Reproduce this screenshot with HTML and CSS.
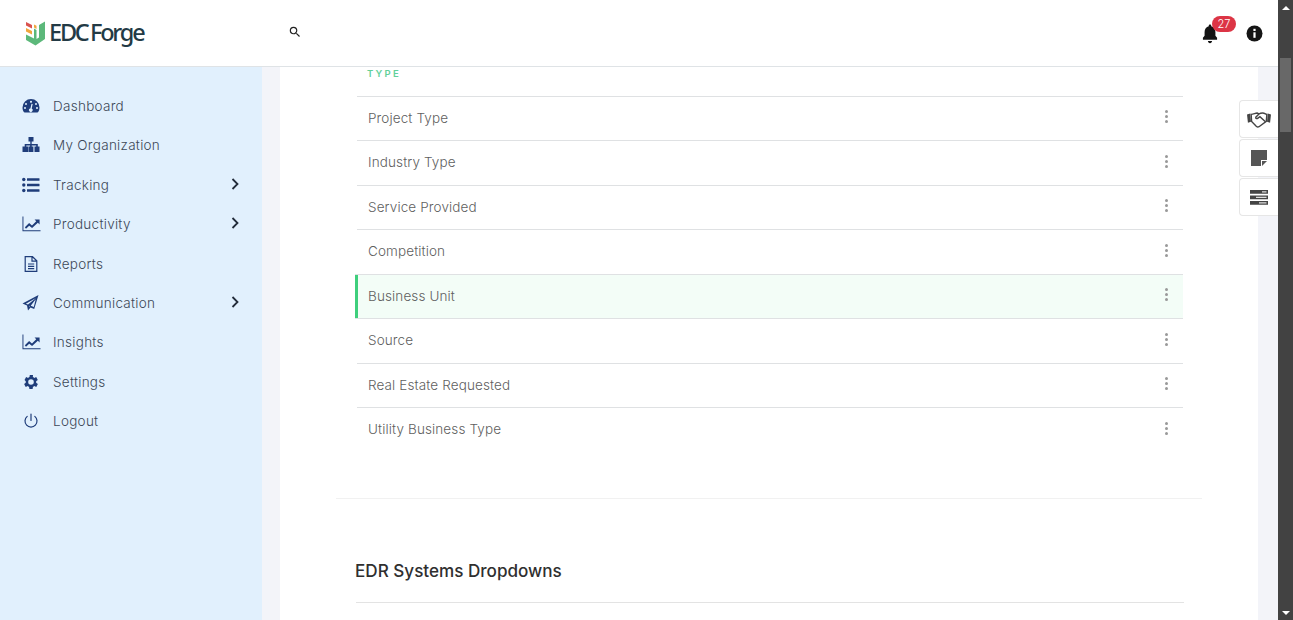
FILE: index.html
```html
<!DOCTYPE html>
<html lang="en">
<head>
<meta charset="utf-8">
<title>EDC Forge</title>
<link rel="stylesheet" href="styles.css">
</head>
<body>
<div class="app">
  <div class="page">
    <header class="topbar">
      <div class="logo">
        <svg class="logo-mark" width="22" height="26" viewBox="0 0 22 26">
          <path d="M1 2l6 3v3.500L1 5.500z" fill="#d9534f"/>
          <path d="M1 8l6 3v3.500l-6-3z" fill="#f0a63c"/>
          <path d="M1 14.500l8 4V8.500l2.500 1.500v9l2.500-1.500V5l6-3.500V19l-9.500 6.500L1 20z" fill="#5cb87a"/>
          <path d="M9 4.500l2.500 1.200V9L9 7.500z" fill="#f0a63c"/>
        </svg>
        <span class="logo-text">EDC Forge</span>
      </div>
      <svg class="search" width="14" height="14" viewBox="0 0 24 24"><path d="M15.500 14h-.79l-.28-.27A6.470 6.470 0 0 0 16 9.500 6.500 6.500 0 1 0 9.500 16c1.610 0 3.090-.59 4.230-1.570l.27.28v.79l5 4.990L20.490 19zm-6 0C7.010 14 5 11.990 5 9.500S7.010 5 9.500 5 14 7.010 14 9.500 11.990 14 9.500 14z" fill="#222"/></svg>
      <div class="top-actions">
        <div class="bell">
          <svg width="20" height="20" viewBox="0 0 24 24"><path d="M12 23c1.400 0 2.500-1.100 2.500-2.500h-5C9.500 21.900 10.600 23 12 23zm8.500-6.500L18.500 14V9.500c0-3.300-2-6-5-6.800V2c0-.9-.7-1.500-1.500-1.500S10.500 1.100 10.500 2v.7c-3 .8-5 3.500-5 6.800V14l-2 2.500V19h17z" fill="#141414"/></svg>
          <span class="badge">27</span>
        </div>
        <svg class="info" width="17" height="17" viewBox="0 0 17 17"><circle cx="8.500" cy="8.500" r="8" fill="#151515"/><rect x="7.400" y="7.300" width="2.200" height="5.500" fill="#fff"/><rect x="7.400" y="3.800" width="2.200" height="2.200" fill="#fff"/></svg>
      </div>
    </header>
    <div class="body-row">
      <nav class="sidebar">
        <a class="nav-item">
          <svg class="nav-icon" viewBox="0 0 18 16"><path fill-rule="evenodd" d="M9 1a8.500 8.500 0 0 0-8.500 8.500c0 1.700.5 3.300 1.300 4.600.2.300.5.400.8.400h12.800c.3 0 .6-.1.800-.4.800-1.300 1.300-2.900 1.300-4.600A8.500 8.500 0 0 0 9 1zM9 2.800a1 1 0 1 1 0 2.100 1 1 0 0 1 0-2.100zM4 5a1 1 0 1 1 0 2 1 1 0 0 1 0-2zM14 5a1 1 0 1 1 0 2 1 1 0 0 1 0-2zM3 9a1 1 0 1 1 0 2 1 1 0 0 1 0-2zM15 9a1 1 0 1 1 0 2 1 1 0 0 1 0-2zM10.700 6l-1 4.600a1.800 1.800 0 1 1-1.300-.2L9.500 5.800z"/></svg>
          <span class="nav-label">Dashboard</span>
        </a>
        <a class="nav-item">
          <svg class="nav-icon" viewBox="0 0 18 16"><path d="M6.500 0h5v4.500H9.700v2.600h6.100v2.400h1.700V15h-5V9.500h1.700V8.500H9.700v1h1.700V15h-5V9.500h1.700v-1H4.300v1h1.700V15H.5V9.500h2.200V7.100h5.600V4.500H6.500z"/></svg>
          <span class="nav-label">My Organization</span>
        </a>
        <a class="nav-item">
          <svg class="nav-icon" viewBox="0 0 18 16"><circle cx="1.800" cy="2.500" r="1.700"/><circle cx="1.800" cy="8" r="1.700"/><circle cx="1.800" cy="13.500" r="1.700"/><rect x="5" y="1.200" width="12.500" height="2.600" rx=".4"/><rect x="5" y="6.700" width="12.500" height="2.600" rx=".4"/><rect x="5" y="12.200" width="12.500" height="2.600" rx=".4"/></svg>
          <span class="nav-label">Tracking</span>
          <svg class="chev" viewBox="0 0 8 12"><path d="M1.500 1l5 5-5 5"/></svg>
        </a>
        <a class="nav-item">
          <svg class="nav-icon nav-wide" viewBox="0 0 20 16"><path d="M.5 0h1v14.500H19.500v1H.5z"/><path d="M3 11.500l4.500-4.500 3 2.500L15 5l-1.800-1.800H18.500V8.500L16.700 6.700 10.600 12.300l-3-2.500-3.400 3.200z"/></svg>
          <span class="nav-label">Productivity</span>
          <svg class="chev" viewBox="0 0 8 12"><path d="M1.500 1l5 5-5 5"/></svg>
        </a>
        <a class="nav-item">
          <svg class="nav-icon nav-line" viewBox="0 0 18 16"><path d="M3.200.7h7.300l4.300 4v10.600H3.200zM10 .7v4.500h4.800M6 8h6.200M6 10.300h6.200M6 12.600h6.200"/></svg>
          <span class="nav-label">Reports</span>
        </a>
        <a class="nav-item">
          <svg class="nav-icon" viewBox="0 0 18 16"><path fill-rule="evenodd" d="M16.500 0L.5 8.600l4.500 1.800 1 5.100 2.500-3 3.700 1.500zM14 3l-8 6.600-2.200-.9zM13.700 4.300l-1.900 7.700-3.100-1.300zM7.200 10.700l.7.300-.9 1.100z"/></svg>
          <span class="nav-label">Communication</span>
          <svg class="chev" viewBox="0 0 8 12"><path d="M1.500 1l5 5-5 5"/></svg>
        </a>
        <a class="nav-item">
          <svg class="nav-icon nav-wide" viewBox="0 0 20 16"><path d="M.5 0h1v14.500H19.500v1H.5z"/><path d="M3 11.500l4.500-4.500 3 2.500L15 5l-1.800-1.800H18.500V8.500L16.700 6.700 10.600 12.300l-3-2.500-3.400 3.200z"/></svg>
          <span class="nav-label">Insights</span>
        </a>
        <a class="nav-item">
          <svg class="nav-icon" viewBox="3 2 20 20"><path d="M19.400 13c.1-.3.100-.7.100-1s0-.7-.1-1l2.100-1.600-2-3.500-2.500 1c-.5-.4-1.100-.7-1.700-1L15.500 3.300h-4l-.4 2.600c-.6.300-1.200.6-1.700 1l-2.500-1-2 3.500L6.500 11c-.1.300-.1.700-.1 1s0 .7.100 1l-2.100 1.600 2 3.500 2.500-1c.5.400 1.100.7 1.700 1l.4 2.600h4l.4-2.600c.6-.3 1.200-.6 1.700-1l2.500 1 2-3.500zM13 15.500a3.500 3.500 0 1 1 0-7 3.500 3.500 0 0 1 0 7z"/></svg>
          <span class="nav-label">Settings</span>
        </a>
        <a class="nav-item">
          <svg class="nav-icon nav-line" viewBox="0 0 18 16"><path d="M9 1v6.500M5.200 3.400a6 6 0 1 0 7.600 0" stroke-linecap="round"/></svg>
          <span class="nav-label">Logout</span>
        </a>
      </nav>
      <main class="canvas">
        <section class="sheet">
          <div class="section">
            <h6 class="eyebrow">TYPE</h6>
            <ul class="rows">
              <li class="row"><span>Project Type</span><span class="dots"><i></i><i></i><i></i></span></li>
              <li class="row"><span>Industry Type</span><span class="dots"><i></i><i></i><i></i></span></li>
              <li class="row"><span>Service Provided</span><span class="dots"><i></i><i></i><i></i></span></li>
              <li class="row"><span>Competition</span><span class="dots"><i></i><i></i><i></i></span></li>
              <li class="row active"><span>Business Unit</span><span class="dots"><i></i><i></i><i></i></span></li>
              <li class="row"><span>Source</span><span class="dots"><i></i><i></i><i></i></span></li>
              <li class="row"><span>Real Estate Requested</span><span class="dots"><i></i><i></i><i></i></span></li>
              <li class="row"><span>Utility Business Type</span><span class="dots"><i></i><i></i><i></i></span></li>
            </ul>
          </div>
          <hr class="divider">
          <h2 class="heading">EDR Systems Dropdowns</h2>
          <div class="heading-rule"></div>
        </section>
      </main>
    </div>
    <aside class="side-tabs">
      <div class="side-tab">
        <svg width="24" height="17" viewBox="0 0 26 18"><path d="M0 3.500l3.500-1 .8 9L1 12.500zM26 3.500l-3.500-1-.8 9 3.300 1z" fill="#444"/><path d="M4.500 3.500C7 3.500 9 2 11 2l2 .8c1.500-.8 3-.8 4-.8 2 0 3.500 1.500 4.500 1.500l-.6 7.500-7.900 5.800c-1 .6-2 .4-3-.4L5 11z" fill="none" stroke="#444" stroke-width="1.500"/><path d="M13 3l-3.500 3.500c-.5 1 1 2 2 1.300L14 6l6 5.500" fill="none" stroke="#444" stroke-width="1.500"/></svg>
      </div>
      <div class="side-tab">
        <svg width="16" height="16" viewBox="0 0 16 16"><path d="M0 0h16v10h-6v6H0z" fill="#555"/><path d="M11 11h5l-5 5z" fill="#555"/></svg>
      </div>
      <div class="side-tab">
        <svg width="18" height="15" viewBox="0 0 18 15"><path d="M0 0h18v3.800H0zM0 5.500h18v3.800H0zM0 11h18v3.800H0z" fill="#444"/><path d="M12 1.200h4.500v1.400H12zM6 6.700h10.500v1.400H6zM9 12.200h7.500v1.400H9z" fill="#ddd"/></svg>
      </div>
    </aside>
  </div>
  <div class="scrollbar">
    <span class="arrow arrow-up"></span>
    <span class="thumb"></span>
    <span class="arrow arrow-down"></span>
  </div>
</div>
</body>
</html>
```
FILE: styles.css
```css
* { box-sizing: border-box; }
html, body { margin: 0; height: 100%; overflow: hidden; }
body { font-family: "Inter", "Liberation Sans", sans-serif; background: #fff; color: #555; }
.app { display: flex; height: 620px; width: 1293px; overflow: hidden; }
.page { position: relative; flex: 1; display: flex; flex-direction: column; min-width: 0; }

.topbar { height: 67px; flex: none; display: flex; align-items: center; padding: 0 15px 0 25px; background: #fff; border-bottom: 1px solid #dfe3e6; }
.logo { display: flex; align-items: center; gap: 2px; width: 263px; }
.logo-mark { flex: none; }
.logo-text { font-family: "Noto Sans", sans-serif; font-size: 23.500px; font-weight: 500; letter-spacing: -2.200px; word-spacing: -1.500px; color: #233a45; line-height: 1; }
.search { flex: none; margin-top: -2px; }
.top-actions { margin-left: auto; display: flex; align-items: center; gap: 26px; margin-top: 0; }
.bell { position: relative; display: flex; padding-top: 1px; }
.badge { position: absolute; left: 12px; top: -7px; width: 24px; height: 16px; border-radius: 8px; background: #dc3545; color: #fff; font-size: 11px; font-weight: 300; line-height: 16px; text-align: center; }

.body-row { flex: 1; display: flex; min-height: 0; }
.sidebar { width: 262px; flex: none; background: #e1f0fd; padding-top: 19.400px; display: flex; flex-direction: column; }
.nav-item { display: flex; align-items: center; height: 39.400px; padding-left: 22px; color: #3d4858; font-size: 13.500px; font-weight: 350; letter-spacing: .28px; }
.nav-icon { width: 18px; height: 16px; flex: none; fill: #1f3d7a; margin-right: 13px; }
.nav-wide { width: 19px; margin-right: 12px; }
.nav-line { fill: none; stroke: #1f3d7a; stroke-width: 1.200; }
.nav-label { flex: 1; }
.chev { width: 8px; height: 12px; margin: -2px 23px 0 0; fill: none; stroke: #222c3a; stroke-width: 1.800; flex: none; }

.canvas { flex: 1; min-width: 0; background: #f3f4f9; padding: 0 20px 0 18px; display: flex; }
.sheet { flex: 1; background: #fff; padding: 0 56px; display: flex; flex-direction: column; }
.section { padding: 0 19px 0 21px; }
.eyebrow { margin: 0; height: 28.500px; padding: 1px 0 0 10px; line-height: 12px; font-size: 9.500px; font-weight: 600; letter-spacing: 2.200px; color: #62d09a; }
.rows { list-style: none; margin: 0; padding: 0; }
.row { position: relative; height: 44.500px; display: flex; align-items: center; justify-content: space-between; padding: 0 15px 1px 11px; border-top: 1px solid #dfe1e3; font-size: 13.500px; font-weight: 350; letter-spacing: .12px; color: #5f5f5f; }
.row.active { background: #f3fdf7; margin-left: -2px; padding-left: 13px; border-bottom: 1px solid #dfe1e3; box-shadow: inset 3px 0 0 #3ecf7c; height: 45.500px; margin-bottom: -1px; }
.dots { display: flex; flex-direction: column; gap: 2px; margin-top: -2px; }
.dots i { display: block; width: 3px; height: 3px; border-radius: 50%; background: #999; }

.divider { margin: 46px 0 0; border: 0; border-top: 1px solid #f1f1f1; height: 1px; flex: none; }
.heading { margin: 61px 0 0 19px; font-size: 17.100px; font-weight: 450; line-height: 22px; color: #2f2f2f; }
.heading-rule { margin: 20px 18px 0 20px; height: 1px; background: #e3e3e3; flex: none; }

.side-tabs { position: absolute; right: 0; top: 100px; display: flex; flex-direction: column; gap: 1px; }
.side-tab { width: 39px; height: 38px; background: #fff; border: 1px solid #e6e6e6; border-right: 0; border-radius: 4px 0 0 4px; display: flex; align-items: center; justify-content: center; }

.scrollbar { position: relative; width: 15px; flex: none; background: #424242; display: flex; flex-direction: column; align-items: center; justify-content: space-between; padding: 6px 0 5px; }
.thumb { position: absolute; left: 2px; top: 58px; width: 11px; height: 74px; background: #686868; }
.arrow { width: 0; height: 0; border-left: 4px solid transparent; border-right: 4px solid transparent; }
.arrow-up { border-bottom: 4px solid #fff; }
.arrow-down { border-top: 4px solid #fff; }
```
